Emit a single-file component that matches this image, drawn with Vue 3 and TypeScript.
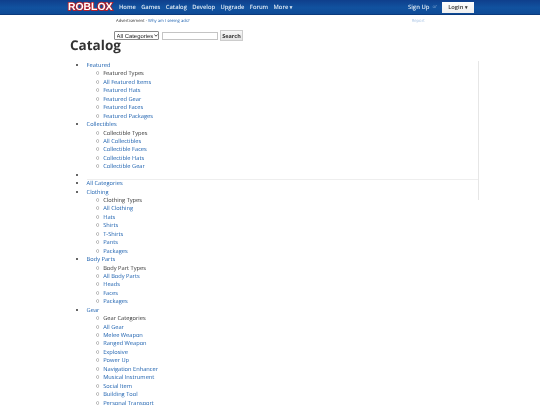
<script setup lang="ts">
interface Group { label: string; title: string; items: string[] }
const before: Group[] = [
  { label: 'Featured', title: 'Featured Types', items: ['All Featured Items', 'Featured Hats', 'Featured Gear', 'Featured Faces', 'Featured Packages'] },
  { label: 'Collectibles', title: 'Collectible Types', items: ['All Collectibles', 'Collectible Faces', 'Collectible Hats', 'Collectible Gear'] },
]
const after: Group[] = [
  { label: 'Clothing', title: 'Clothing Types', items: ['All Clothing', 'Hats', 'Shirts', 'T-Shirts', 'Pants', 'Packages'] },
  { label: 'Body Parts', title: 'Body Part Types', items: ['All Body Parts', 'Heads', 'Faces', 'Packages'] },
  { label: 'Gear', title: 'Gear Categories', items: ['All Gear', 'Melee Weapon', 'Ranged Weapon', 'Explosive', 'Power Up', 'Navigation Enhancer', 'Musical Instrument', 'Social Item', 'Building Tool', 'Personal Transport'] },
]
const nav = ['Home', 'Games', 'Catalog', 'Develop', 'Upgrade', 'Forum']
</script>

<template>
  <div class="page">
    <header class="topbar">
      <span class="logo">ROBLOX</span>
      <nav class="nav">
        <a v-for="n in nav" :key="n" class="nav-link">{{ n }}</a>
        <a class="nav-link">More <span class="caret">▾</span></a>
      </nav>
      <div class="account">
        <a class="nav-link signup">Sign Up</a>
        <span class="or">or</span>
        <button class="login">Login <span class="caret dark">▾</span></button>
      </div>
    </header>

    <div class="ad-row">
      <span class="ad-text">Advertisement - <a class="link">Why am I seeing ads?</a></span>
      <a class="report">Report</a>
    </div>

    <div class="search-row">
      <div class="select-wrap">
        <select class="select"><option>All Categories</option></select>
        <svg class="chevron" viewBox="0 0 4 3" width="4" height="3"><path d="M0.4 0.5 L2 2.2 L3.6 0.5" fill="none" stroke="#222" stroke-width="0.8" /></svg>
      </div>
      <input class="input" type="text" />
      <button class="search">Search</button>
    </div>

    <h1 class="title">Catalog</h1>

    <div class="panel">
      <ul class="outer">
        <li v-for="g in before" :key="g.label">
          <a class="link">{{ g.label }}</a>
          <ul class="inner">
            <li>{{ g.title }}</li>
            <li v-for="i in g.items" :key="i"><a class="link">{{ i }}</a></li>
          </ul>
        </li>
        <li class="sep"><div class="rule"></div></li>
        <li><a class="link">All Categories</a></li>
        <li v-for="g in after" :key="g.label">
          <a class="link">{{ g.label }}</a>
          <ul class="inner">
            <li>{{ g.title }}</li>
            <li v-for="i in g.items" :key="i"><a class="link">{{ i }}</a></li>
          </ul>
        </li>
      </ul>
    </div>
  </div>
</template>

<style>
html, body { margin: 0; overflow: hidden; background: #fff; }
</style>

<style scoped>
.page {
  width: 540px;
  height: 405px;
  overflow: hidden;
  font-family: "Open Sans", "Noto Sans", sans-serif;
  font-size: 5.7px;
  line-height: 8.44px;
  color: #333;
  background: #fff;
  text-rendering: geometricPrecision;
  filter: blur(0.25px);
}
.topbar {
  height: 15px;
  box-sizing: border-box;
  display: flex;
  align-items: center;
  padding-left: 68px;
  padding-right: 66px;
  background: linear-gradient(#0f3f8c, #11529f 55%, #0e4a96);
  border-bottom: 1px solid #0b3a7c;
}
.logo {
  width: 44px;
  margin-right: 7px;
  padding-top: 1px;
  font-family: "Liberation Sans", sans-serif;
  font-size: 10.4px;
  font-weight: 700;
  line-height: 12px;
  white-space: nowrap;
  color: #fff;
  -webkit-text-stroke: 1.8px #b3202c;
  paint-order: stroke fill;
}
.nav { display: flex; gap: 5.4px; padding-top: 1px; }
.nav-link {
  color: #dfe9f5;
  font-size: 5.8px;
  font-weight: 600;
  white-space: nowrap;
}
.caret { font-size: 5px; }
.caret.dark { color: #333; }
.account { margin-left: auto; display: flex; align-items: center; }
.signup { font-size: 5.9px; padding-top: 1px; }
.or { margin: 1px 5px 0 3px; font-size: 4.5px; color: #7fa3d0; }
.login {
  width: 32px;
  height: 11px;
  padding: 0;
  border: 0;
  background: linear-gradient(#fff, #eee);
  font-family: inherit;
  font-size: 5.8px;
  font-weight: 600;
  line-height: 11px;
  color: #333;
}
.ad-row {
  display: flex;
  height: 10px;
  padding-left: 116px;
  font-size: 4.2px;
  line-height: 13px;
}
.report { margin-left: 222px; color: #a9c4e4; }
.search-row {
  display: flex;
  align-items: center;
  gap: 3px;
  height: 11px;
  margin-top: 5px;
  margin-bottom: -3px;
  padding-left: 114px;
}
.select-wrap { position: relative; display: flex; }
.select {
  appearance: none;
  width: 45px;
  height: 9px;
  padding: 0 0 0 1.5px;
  box-sizing: border-box;
  border: 1px solid #8a8a8a;
  border-radius: 1px;
  background: #fff;
  font-family: "Liberation Sans", sans-serif;
  font-size: 5.9px;
  color: #222;
}
.chevron {
  position: absolute;
  right: 1.5px;
  top: 3px;
}
.input {
  width: 56px;
  height: 8px;
  padding: 0;
  box-sizing: border-box;
  border: 1px solid #c4c4c4;
  background: #fff;
}
.search {
  width: 23px;
  height: 11px;
  margin-left: -1px;
  padding: 0;
  box-sizing: border-box;
  border: 1px solid #ccc;
  background: linear-gradient(#f7f7f7, #e4e4e4);
  font-family: inherit;
  font-size: 5.5px;
  font-weight: 700;
  color: #333;
}
.title {
  margin: 0 0 9px 70px;
  font-size: 13.5px;
  font-weight: 700;
  line-height: 14px;
  color: #333;
}
.panel {
  width: 408px;
  height: 139px;
  margin-left: 70px;
  border-right: 1px solid #e6e6e6;
}
ul { margin: 0; padding: 0; }
.outer { padding-left: 16.6px; list-style: disc; }
.inner { padding-left: 16.6px; list-style: none; }
.inner > li { position: relative; }
.inner > li::before {
  content: "○";
  position: absolute;
  left: -7.2px;
  top: 0;
  font-family: "DejaVu Sans", sans-serif;
  font-size: 3.8px;
  font-weight: 700;
  color: #333;
}
.link { color: #1a5fae; text-decoration: none; }
.sep { height: 8.44px; }
.rule { height: 9px; box-sizing: border-box; border-bottom: 1px solid #eee; }
</style>
